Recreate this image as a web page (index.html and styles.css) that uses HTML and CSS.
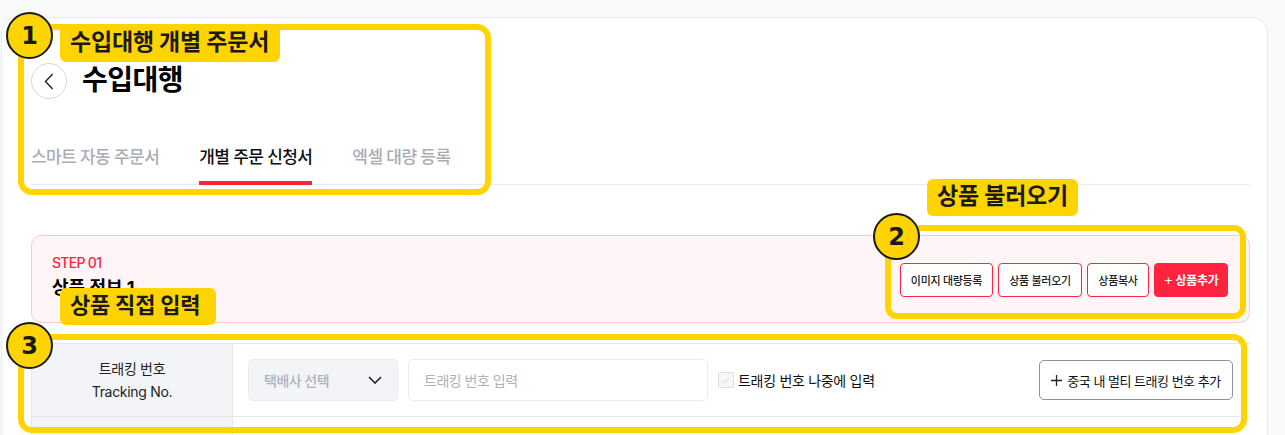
FILE: index.html
```html
<!DOCTYPE html>
<html lang="ko">
<head>
<meta charset="utf-8">
<title>수입대행</title>
<link rel="stylesheet" href="styles.css">
</head>
<body>
<main class="card">
  <header class="head">
    <button class="back" aria-label="뒤로">
      <svg width="10" height="17" viewBox="0 0 10 17"><path d="M8.7 1 1.5 8.5 8.7 16" fill="none" stroke="#222" stroke-width="1.4"/></svg>
    </button>
    <h1 class="title">수입대행</h1>
  </header>
  <nav class="tabs">
    <a class="tab">스마트 자동 주문서</a>
    <a class="tab active">개별 주문 신청서</a>
    <a class="tab">엑셀 대량 등록</a>
  </nav>
  <section class="step">
    <div class="step-text">
      <div class="step-no">STEP 01</div>
      <div class="step-title">상품 정보 1</div>
    </div>
    <div class="actions">
      <button class="btn">이미지 대량등록</button>
      <button class="btn wide">상품 불러오기</button>
      <button class="btn narrow">상품복사</button>
      <button class="btn primary"><span class="plus">+</span> 상품추가</button>
    </div>
  </section>
  <section class="table">
    <div class="row">
      <div class="th">트래킹 번호<br>Tracking No.</div>
      <div class="td">
        <div class="select"><span>택배사 선택</span>
          <svg width="14" height="8" viewBox="0 0 14 8"><path d="M1 1l6 6 6-6" fill="none" stroke="#222" stroke-width="1.6"/></svg>
        </div>
        <div class="input">트래킹 번호 입력</div>
        <label class="check"><span class="box"><svg width="8" height="7" viewBox="0 0 8 7"><path d="M1 3.5 3 6l4-5" fill="none" stroke="#d5d8dc" stroke-width="1"/></svg></span>트래킹 번호 나중에 입력</label>
        <button class="multi"><svg width="11" height="11" viewBox="0 0 11 11"><path d="M5.5 0v11M0 5.5h11" fill="none" stroke="#222" stroke-width="1.3"/></svg>중국 내 멀티 트래킹 번호 추가</button>
      </div>
    </div>
    <div class="row next">
      <div class="th"></div>
      <div class="td"></div>
    </div>
  </section>
</main>

<div class="frame f1"></div>
<div class="frame f2"></div>
<div class="frame f3"></div>
<div class="badge b1">1</div>
<div class="badge b2">2</div>
<div class="badge b3">3</div>
<div class="note n1">수입대행 개별 주문서</div>
<div class="note n2">상품 불러오기</div>
<div class="note n3">상품 직접 입력</div>
</body>
</html>
```
FILE: styles.css
```css
* { box-sizing: border-box; }
html, body { margin: 0; height: 435px; overflow: hidden; }
body {
  background: #f8f9fb;
  font-family: "Inter", "Noto Sans CJK KR", sans-serif;
  color: #111;
  padding: 17px 17px 0 1px;
  position: relative;
}
.card {
  background: #fff;
  border: 1px solid #e8ebef;
  border-bottom: 0;
  border-radius: 16px 16px 0 0;
  height: 418px;
  padding: 45px 17px 0 29px;
  overflow: hidden;
}
.head { display: flex; align-items: center; gap: 15px; height: 36px; }
.back {
  width: 36px; height: 36px; border-radius: 50%;
  border: 1px solid #d5d7db; background: #fff; padding: 0;
  display: flex; align-items: center; justify-content: center;
}
.title { margin: -3px 0 0; font-size: 28px; font-weight: 700; line-height: 36px; color: #000; letter-spacing: -0.5px; }
.tabs {
  display: flex; gap: 40px; margin-top: 42px; height: 44px;
  border-bottom: 1px solid #e8ebef;
}
.tab { font-size: 17px; font-weight: 500; color: #a9adb5; line-height: 30px; height: 44px; letter-spacing: -0.6px; padding-top: 1px; }
.tab.active { color: #111; border-bottom: 4px solid #ff2340; }
.step {
  margin-top: 50px; height: 88px;
  background: #fff5f6; border: 1px solid #fdc7cf; border-radius: 10px;
  padding: 0 21px 0 20px;
  display: flex; align-items: center; justify-content: space-between;
}
.step-text { margin-bottom: 4px; }
.step-no { font-size: 14px; font-weight: 500; color: #ff2340; line-height: 18px; letter-spacing: -0.7px; }
.step-title { font-size: 18px; font-weight: 700; line-height: 26px; margin-top: 3px; color: #000; }
.actions { display: flex; gap: 5px; margin-top: 1px; }
.btn {
  height: 34px; width: 93px; padding: 0;
  font: 500 11px "Inter", "Noto Sans CJK KR", sans-serif;
  letter-spacing: -0.3px;
  color: #222; background: #fff;
  border: 1px solid #ff2340; border-radius: 4px;
}
.btn.wide { width: 84px; }
.btn.narrow { width: 62px; }
.btn.primary { width: 74px; background: #ff2340; color: #fff; font-size: 12px; font-weight: 700; }
.plus { font-weight: 300; font-size: 15px; line-height: 1; }
.table { margin-top: 20px; border-top: 1px solid #e5e7eb; }
.row { display: grid; grid-template-columns: 202px 1fr; height: 73px; border-bottom: 1px solid #e5e7eb; }
.next { height: 40px; }
.th {
  background: #f3f4f7; border-left: 1px solid #e5e7eb; border-right: 1px solid #e5e7eb;
  font-size: 14px; line-height: 23px; text-align: center; color: #222; letter-spacing: -0.3px;
  display: flex; align-items: center; justify-content: center;
}
.td { display: flex; align-items: center; padding: 0 17px 0 15px; font-size: 14px; letter-spacing: -0.5px; }
.select {
  width: 150px; height: 42px; padding: 0 15px;
  background: #f3f4f7; border: 1px solid #e9ebee; border-radius: 5px;
  display: flex; align-items: center; justify-content: space-between;
  color: #aeb2b9; font-weight: 500;
}
.input {
  width: 300px; height: 42px; margin-left: 10px; padding: 0 15px;
  border: 1px solid #e9ebee; border-radius: 5px; background: #fff;
  display: flex; align-items: center; color: #aeb2b9;
}
.check { display: flex; align-items: center; gap: 4px; margin-left: 10px; color: #111; font-weight: 400; letter-spacing: -0.3px; }
.box {
  width: 16px; height: 16px; border: 1px solid #dcdfe3; border-radius: 2px; background: #f6f7f8;
  display: flex; align-items: center; justify-content: center;
}
.multi {
  margin-left: auto; height: 40px; width: 194px; padding: 0;
  background: #fff; border: 1px solid #8f939a; border-radius: 5px;
  font: 400 13px "Inter", "Noto Sans CJK KR", sans-serif; letter-spacing: -0.5px; color: #111;
  display: flex; align-items: center; justify-content: center; gap: 5px;
}

.frame { position: absolute; border: 6px solid #ffd400; border-radius: 14px; }
.f1 { left: 18px; top: 24px; width: 473px; height: 171px; }
.f2 { left: 885px; top: 225px; width: 361px; height: 94px; border-radius: 12px; }
.f3 { left: 18px; top: 334px; width: 1229px; height: 99px; }
.badge {
  position: absolute; width: 47px; height: 47px; border-radius: 50%;
  background: #ffd400; border: 2px solid #1a1a1a;
  display: flex; align-items: center; justify-content: center;
  font: 700 24px "DejaVu Sans", sans-serif; color: #1a1a1a;
}
.b1 { left: 6px; top: 12px; }
.b2 { left: 873px; top: 213px; }
.b3 { left: 6px; top: 322px; }
.note {
  position: absolute; height: 37px; padding: 0 10px; border-radius: 6px;
  background: #ffd400; color: #1a1a1a;
  font-size: 22px; font-weight: 700; line-height: 35px; white-space: nowrap;
  letter-spacing: -0.2px;
}
.n1 { left: 60px; top: 25px; width: 220px; border-radius: 0 0 6px 6px; font-size: 23px; }
.n2 { left: 927px; top: 179px; width: 151px; font-size: 23px; }
.n3 { left: 60px; top: 288px; width: 156px; }
```
